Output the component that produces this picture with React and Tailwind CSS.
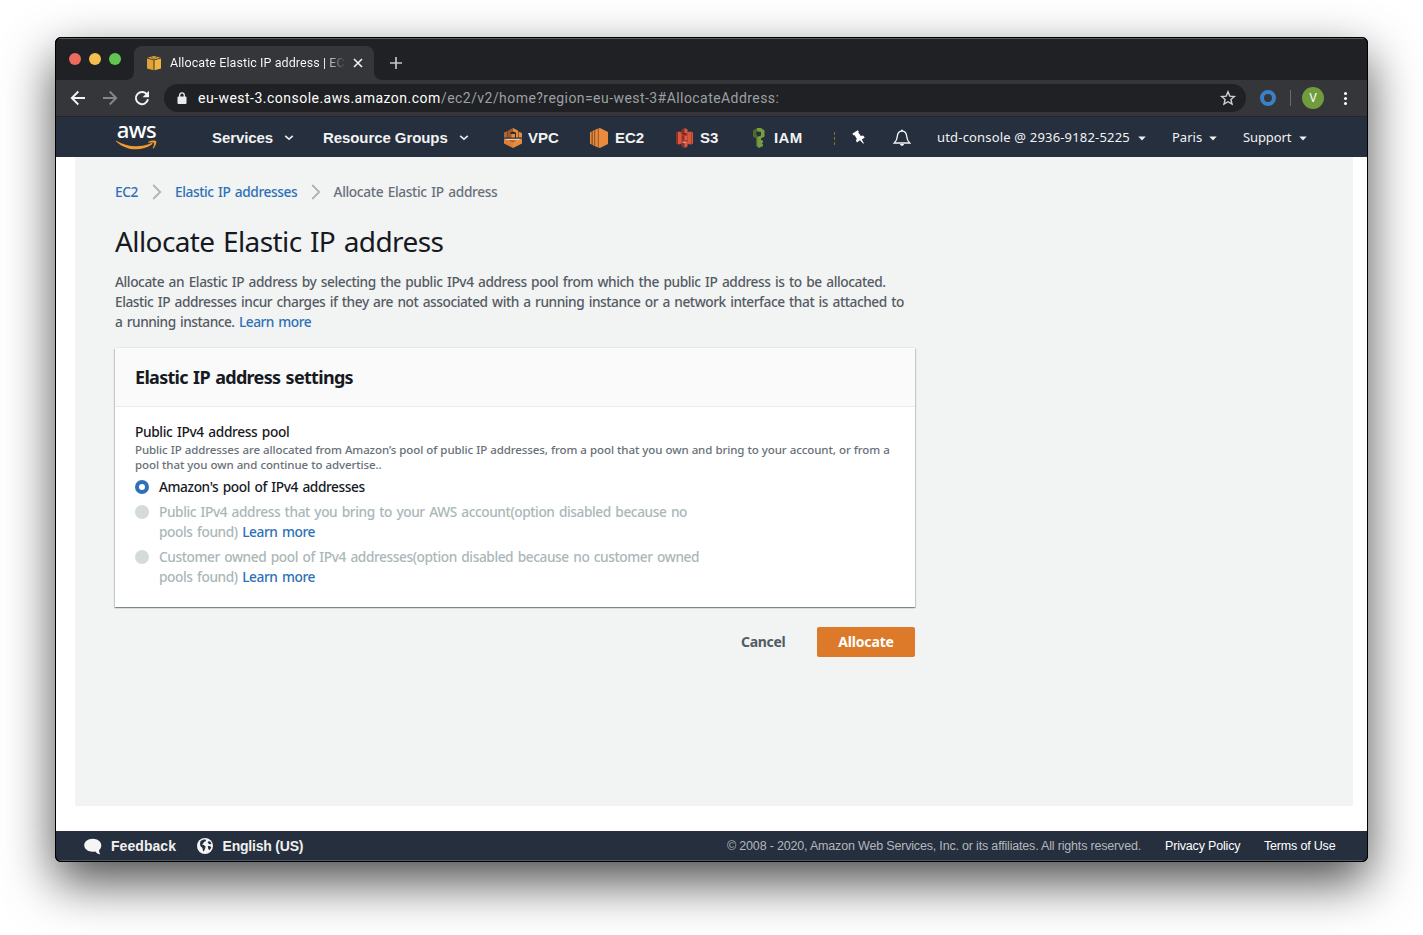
import React from "react";

const ember = "font-['Noto_Sans',sans-serif]";
const roboto = "font-['Roboto',sans-serif]";
const helv = "font-['Liberation_Sans',sans-serif]";

function Cube() {
  return (
    <svg width="16" height="16" viewBox="0 0 16 16" className="shrink-0">
      <path d="M1 3.600 7.500 5.200v10.100L1 13.400z" fill="#dfa236" />
      <path d="M15 3.600 8.500 5.200v10.100l6.500-1.900z" fill="#eeb340" />
      <path d="M1.400 2.800 8 1l6.600 1.800L8 4.400z" fill="#e8ac3c" />
      <path d="M5 2.500 8 3.200l3-.7" fill="none" stroke="#6b5425" strokeWidth=".7" />
    </svg>
  );
}

function TabFoot({ flip }) {
  return (
    <svg width="8" height="8" viewBox="0 0 8 8" fill="#35363a" className={flip ? "shrink-0 -scale-x-100" : "shrink-0"}>
      <path d="M8 0v8H0c4.400 0 8-3.600 8-8z" />
    </svg>
  );
}

function TabStrip() {
  return (
    <div className="flex h-[42px] bg-[#202124] pl-[13px] shadow-[inset_0_1px_0_#5c5d60]">
      <div className="mt-[15px] flex gap-2">
        <span className="size-3 rounded-full bg-[#ed6a5e]" />
        <span className="size-3 rounded-full bg-[#f5bf4f]" />
        <span className="size-3 rounded-full bg-[#61c554]" />
      </div>
      <div className="ml-[5px] flex items-end">
        <TabFoot />
        <div className="flex h-[34px] w-[240px] items-center rounded-t-lg bg-[#35363a] pl-3">
          <Cube />
          <div className={`${roboto} ml-2 w-[176px] whitespace-nowrap bg-gradient-to-r from-white from-[88%] to-[#35363a] bg-clip-text text-[12.500px] leading-4 tracking-[0.080px] text-transparent`}>
            Allocate Elastic IP address | EC
          </div>
          <svg width="10" height="10" viewBox="0 0 10 10" className="ml-[7px] shrink-0" stroke="#f1f1f1" strokeWidth="1.600">
            <path d="M1 1l8 8M9 1l-8 8" />
          </svg>
        </div>
        <TabFoot flip />
      </div>
      <svg width="12" height="12" viewBox="0 0 12 12" className="ml-2 mt-[19px]" stroke="#c4c5c8" strokeWidth="1.700">
        <path d="M6 0v12M0 6h12" />
      </svg>
    </div>
  );
}

function Toolbar() {
  return (
    <div className="flex h-[37px] items-center border-b border-[#242528] bg-[#35363a] pl-[14px]">
      <svg width="16" height="16" viewBox="0 0 16 16" fill="none" stroke="#f1f3f4" strokeWidth="1.900">
        <path d="M15 8H2M8.300 1.500 1.800 8l6.500 6.500" />
      </svg>
      <svg width="16" height="16" viewBox="0 0 16 16" fill="none" stroke="#85868a" strokeWidth="1.900" className="ml-4">
        <path d="M1 8h13M7.700 1.500 14.200 8l-6.500 6.500" />
      </svg>
      <svg width="16" height="16" viewBox="0 0 16 16" fill="none" className="ml-4">
        <path d="M13.300 5A6.100 6.100 0 1 0 14 9.300" stroke="#f1f3f4" strokeWidth="2" />
        <path d="M15 .8v6.400H8.600z" fill="#f1f3f4" />
      </svg>
      <div className="ml-[14px] flex h-7 w-[1082px] items-center rounded-full bg-[#202124] pl-[13px]">
        <svg width="10" height="13" viewBox="0 0 10 13">
          <rect x=".5" y="4.500" width="9" height="7.500" rx="1" fill="#e8eaed" />
          <path d="M2.700 5V3.200a2.300 2.300 0 0 1 4.600 0V5" fill="none" stroke="#e8eaed" strokeWidth="1.300" />
        </svg>
        <div className={`${roboto} ml-[11px] flex w-[1000px] whitespace-nowrap text-[14px] leading-5 text-[#9aa0a6]`}>
          <span className="w-[243px] tracking-[0.480px] text-white">eu-west-3.console.aws.amazon.com</span>
          <span className="tracking-[0.440px]">/ec2/v2/home?region=eu-west-3#AllocateAddress:</span>
        </div>
        <svg width="16" height="16" viewBox="0 0 16 16" fill="none" stroke="#d0d2d5" strokeWidth="1.400" className="ml-[22px]">
          <path d="M8 1.800l1.800 4.300 4.600.4-3.500 3 1.100 4.600L8 11.700l-4 2.400 1.100-4.600-3.500-3 4.600-.4z" />
        </svg>
      </div>
      <span className="ml-[14px] size-4 rounded-full border-4 border-[#3a7fc8]" />
      <span className="ml-[14px] h-4 w-px bg-[#6a6b6f]" />
      <span className={`${roboto} ml-[11px] flex size-[22px] items-center justify-center rounded-full bg-[#719c3e] text-[12px] text-white`}>V</span>
      <span className="ml-[20px] flex flex-col gap-[2px]">
        <i className="size-[3px] rounded-full bg-white" />
        <i className="size-[3px] rounded-full bg-white" />
        <i className="size-[3px] rounded-full bg-white" />
      </span>
    </div>
  );
}

function Chevron({ className }) {
  return (
    <svg width="10" height="6" viewBox="0 0 10 6" fill="none" stroke="#e8e8e8" strokeWidth="1.600" className={className}>
      <path d="M1.200 .8 5 4.200 8.800 .8" />
    </svg>
  );
}

function Caret({ className }) {
  return (
    <svg width="8" height="5" viewBox="0 0 8 5" fill="#f0f0f0" className={className}>
      <path d="M.3.5h7.400L4 4.500z" />
    </svg>
  );
}

function AwsLogo() {
  return (
    <div className={`${ember} mb-[5px] ml-[58.500px] flex w-[44px] flex-col items-center`}>
      <span className="h-[19px] text-[22px] font-medium leading-[16px] tracking-[-0.500px] text-white">aws</span>
      <svg width="43" height="10" viewBox="0 0 43 10" fill="#f29a2e">
        <path d="M1.300.8C7 4.300 14 6.300 21 6.300c5.500 0 10.500-1.200 15.500-3.300.9-.3 1.500.6.700 1.200C32.700 7.600 26.500 9.300 21 9.300 13.500 9.300 6.600 6.500 1.100 1.400.7 1 .9.6 1.300.8z" />
        <path d="M33.200 2c2.800-1.900 7.300-1.500 7.900-.9.600.7-.1 5.200-2.700 7.300-.4.3-.8.100-.6-.3.600-1.500 1.700-4.500 1.200-5.200-.5-.6-3.700-.3-5.500-.2-.5.1-.6-.4-.3-.7z" />
      </svg>
    </div>
  );
}

function VpcIcon() {
  return (
    <svg width="18" height="20" viewBox="0 0 18 20">
      <path d="M0 4.500 3.500 3v6.500H0z" fill="#b8642a" />
      <path d="M4 2.500 9 0v3.500L6.500 4.300V6H9v3.500H4z" fill="#a35a25" />
      <path d="M9 0l5 2.500v7h-2V4.500L9 3.500zM14.500 3.500 18 5v4.500h-3.500zM7.500 6H11v3.500H7.500z" fill="#e88b3e" />
      <path d="M9 12h9v3.500L9 20z" fill="#e88b3e" />
      <path d="M0 12h9v8l-9-4.500z" fill="#e07f36" />
      <path d="M0 10.700h18v.8l-9 1.500-9-1.500z" fill="#f3c9a0" />
      <path d="M4 12.300h9L9 14.300z" fill="#a35a25" />
    </svg>
  );
}

function Ec2Icon() {
  return (
    <svg width="18" height="20" viewBox="0 0 18 20">
      <path d="M8.500 .5 10 0l8 4v12l-8 4-1.500-.5z" fill="#e88b3e" />
      <path d="M5 1.700 8.500.5v19L5 18.300zM2.500 3l2-1v16l-2-1zM0 4.300 1.800 3.500v13L0 15.700z" fill="#e88b3e" />
      <path d="M7.800.5h1v19h-1zM4.300 2h1v16h-1zM1.600 3.500h1v13h-1z" fill="#a35a25" />
    </svg>
  );
}

function S3Icon() {
  return (
    <svg width="17" height="20" viewBox="0 0 17 20">
      <path d="M2 3.700h13v12.600H2z" fill="#a63d2c" />
      <path d="M0 4.500 2 3.500v13L0 15.500z" fill="#8c3123" />
      <path d="M2 3.500 5.500 4.500v11L2 16.500z" fill="#d9573f" />
      <path d="M15 3.500l-3.500 1v11l3.500 1zM17 4.500l-2-1v13l2-1z" fill="#d9573f" />
      <path d="M15 3.500h.6v13H15z" fill="#8c3123" />
      <path d="M5.500 1.500 8.500 0v5l-3 .7z" fill="#8c3123" />
      <path d="M8.500 0l3 1.500v4.200l-3-.7z" fill="#dd5b46" />
      <path d="M5.500 5.700 8.500 5l3 .7-3 .8z" fill="#5a1f17" />
      <path d="M6 8h2.500v4H6z" fill="#8c3123" />
      <path d="M8.500 8H11v4H8.500z" fill="#dd5b46" />
      <path d="M5.500 14.300l3 .7v5l-3-1.500z" fill="#8c3123" />
      <path d="M8.500 15l3-.7v4.200l-3 1.500z" fill="#dd5b46" />
      <path d="M5.500 14.300l3-.8 3 .8-3 .7z" fill="#f0a091" />
    </svg>
  );
}

function IamIcon() {
  return (
    <svg width="12" height="20" viewBox="0 0 12 20">
      <path d="M0 2.500 4 0v3L3.300 4v2.500L4.500 8v11L3 17.500v-7L0 8.500z" fill="#4f6b2c" />
      <path d="M4 0h4l3.500 2.500v6L8 10.500v1.200l2 1v2l-1.500.6 1.500 1V18l-4 2-1.800-1.500V9L8 7.500V4L4 3.200z" fill="#769e41" />
    </svg>
  );
}

function Shortcut({ icon, label, className, textClass }) {
  return (
    <div className={`flex items-center ${className}`}>
      {icon}
      <span className={textClass}>{label}</span>
    </div>
  );
}

function NavBar() {
  return (
    <div className={`${helv} flex h-10 items-center whitespace-nowrap bg-[#252f3e] pt-[2px] text-[15px] font-bold text-[#f2f2f2]`}>
      <AwsLogo />
      <span className="ml-[53.500px] w-[62px] tracking-[-0.100px]">Services</span>
      <Chevron className="ml-[10px]" />
      <span className="ml-[29px] w-[126px] tracking-[-0.080px]">Resource Groups</span>
      <Chevron className="ml-[10px]" />
      <Shortcut icon={<VpcIcon />} label="VPC" className="ml-[35px] w-[86px]" textClass="ml-[6px]" />
      <Shortcut icon={<Ec2Icon />} label="EC2" className="w-[86px]" textClass="ml-[7px]" />
      <Shortcut icon={<S3Icon />} label="S3" className="w-[77px]" textClass="ml-[7px]" />
      <Shortcut icon={<IamIcon />} label="IAM" className="w-[81px]" textClass="ml-[9px] tracking-[0.400px]" />
      <span className="h-[13px] w-0 border-l border-dashed border-[#9a6b22]" />
      <svg width="13" height="15" viewBox="0 0 13 15" className="mb-[2px] ml-[17px]" fill="#fff">
        <path d="M.5 3.500 5.800.3l1 1.200-.5 1 2.600 3.400 2.200-.3 1.700 2-3 2 2.100 3.700-.6.5L8 10.200 4.900 12.400 4 10.500l.8-1.800-2.400-3.600-1.200.1z" />
      </svg>
      <svg width="18" height="18" viewBox="0 0 18 18" className="ml-[28px]" fill="none" stroke="#f2f2f2" strokeWidth="1.300">
        <path d="M9 2.100c-3.100 0-4.500 2.300-4.700 5.300-.2 3-.8 4.600-3 6.600h15.400c-2.200-2-2.800-3.600-3-6.600C13.500 4.400 12.100 2.100 9 2.100z" />
        <path d="M7 15h4c0 1-.9 1.800-2 1.800S7 16 7 15zM8 .7h2v1.500H8z" fill="#f2f2f2" stroke="none" />
      </svg>
      <div className={`${ember} flex items-center text-[13px] font-normal`}>
        <span className="ml-[26px] w-[194px] tracking-[0.180px]">utd-console @ 2936-9182-5225</span>
        <Caret className="ml-[7px]" />
        <span className="ml-[26px] w-[30px]">Paris</span>
        <Caret className="ml-[7px]" />
        <span className="ml-[26px] w-[48px] tracking-[-0.100px]">Support</span>
        <Caret className="ml-[8px]" />
      </div>
    </div>
  );
}

function Crumb() {
  return (
    <svg width="10" height="16" viewBox="0 0 10 16" fill="none" stroke="#aab7b8" strokeWidth="1.900">
      <path d="M1.200 1l7 7-7 7" />
    </svg>
  );
}

function Option({ children, checked }) {
  return (
    <div className={`mb-[5px] flex ${checked ? "text-[#16191f]" : "text-[#aab7b8]"}`}>
      <span className={`mt-[3px] size-[14px] shrink-0 rounded-full ${checked ? "border-[4.500px] border-[#2f70b7] bg-white" : "bg-[#d5dbdb]"}`} />
      <div className="ml-[10px] whitespace-nowrap">{children}</div>
    </div>
  );
}

const link = "text-[#2d70b8]";

function Content() {
  return (
    <div className="h-[674px] bg-white pl-[19px] pr-[14px]">
      <div className={`${ember} h-[649px] bg-[#f2f3f3] pl-10 pt-[25px] text-[13.700px] font-medium leading-5 tracking-[-0.410px] text-[#545b64] [word-spacing:1.300px]`}>
        <div className="flex items-center whitespace-nowrap">
          <span className={`w-[25px] ${link}`}>EC2</span>
          <span className="ml-[12px] flex"><Crumb /></span>
          <span className={`ml-[13px] w-[123px] ${link}`}>Elastic IP addresses</span>
          <span className="ml-[13px] flex"><Crumb /></span>
          <span className="ml-[12.500px] tracking-[-0.340px] text-[#687078]">Allocate Elastic IP address</span>
        </div>
        <h1 className="mt-[21px] whitespace-nowrap text-[28px] font-normal leading-9 tracking-[-0.600px] text-[#16191f] [word-spacing:1.800px]">Allocate Elastic IP address</h1>
        <p className="mt-[13px] whitespace-nowrap">
          <span className="tracking-[-0.405px]">Allocate an Elastic IP address by selecting the public IPv4 address pool from which the public IP address is to be allocated.</span><br />
          <span className="tracking-[-0.440px]">Elastic IP addresses incur charges if they are not associated with a running instance or a network interface that is attached to</span><br />
          <span className="tracking-[-0.480px]">a running instance. <span className={link}>Learn more</span></span>
        </p>
        <div className="mt-4 h-[259px] w-[800px] bg-white shadow-[0_1px_1px_0_rgba(0,28,36,0.3),1px_1px_1px_0_rgba(0,28,36,0.15),-1px_1px_1px_0_rgba(0,28,36,0.15),0_-1px_0_0_#e6e8e8]">
          <div className="flex h-[59px] items-center border-b border-[#eaeded] bg-[#fafafa] px-5">
            <h2 className="whitespace-nowrap text-[18px] font-bold leading-[22px] tracking-[-0.700px] text-[#16191f]">Elastic IP address settings</h2>
          </div>
          <div className="px-5 pt-[15px]">
            <div className="tracking-[-0.350px] text-[#16191f]">Public IPv4 address pool</div>
            <div className="mb-[5px] whitespace-nowrap text-[11.500px] leading-[15px] tracking-[-0.100px] text-[#687078] [word-spacing:0.250px]">
              Public IP addresses are allocated from Amazon’s pool of public IP addresses, from a pool that you own and bring to your account, or from a<br />
              pool that you own and continue to advertise..
            </div>
            <Option checked>Amazon's pool of IPv4 addresses</Option>
            <Option>
              Public IPv4 address that you bring to your AWS account(option disabled because no<br />
              pools found) <span className={link}>Learn more</span>
            </Option>
            <Option>
              Customer owned pool of IPv4 addresses(option disabled because no customer owned<br />
              pools found) <span className={link}>Learn more</span>
            </Option>
          </div>
        </div>
        <div className="mt-5 flex h-[30px] w-[800px] items-center justify-end text-[14px] font-bold tracking-[-0.300px]">
          <span className="mr-[31px] w-[45px]">Cancel</span>
          <button className="flex h-[30px] w-[98px] items-center justify-center rounded-[2px] bg-[#dd7a2a] tracking-[-0.150px] text-white">Allocate</button>
        </div>
      </div>
    </div>
  );
}

function Footer() {
  return (
    <div className={`${helv} flex h-[30px] items-center whitespace-nowrap border-b border-[#4b5866] bg-[#252f3e] pl-[28px] pt-px text-[14px] font-bold text-[#f0f0f0]`}>
      <svg width="18" height="17" viewBox="0 0 18 17" fill="#f5f5f5">
        <path d="M8.700.7C4 .7.200 3.600.200 7.200s3.800 6.500 8.500 6.500c1 0 1.900-.1 2.700-.3 1 1.500 2.600 2.700 4.900 2.900-.9-1.100-1.300-2.700-1.200-4.200 1.400-1.200 2.200-2.900 2.200-4.900 0-3.600-3.900-6.500-8.600-6.500z" />
      </svg>
      <span className="ml-[9px] w-[66px] tracking-[0.050px]">Feedback</span>
      <svg width="16" height="16" viewBox="0 0 16 16" className="ml-[20px]">
        <circle cx="8" cy="8" r="8" fill="#f5f5f5" />
        <path d="M3.500 3 6.500 1.500l2.700.300L8.500 3.500l-1.500.3-.5 1.500-1.700 1 2.400.9 1.500 1.600-.8 2.200-1 2.500-1-.8-.4-2.600-2-1.800L3 6zM10.500 4.500l1.500-1.500 1.500 1 1 2-2.200.3zM10.800 8l2.600.2.900 1.500-2 2.600-1.200-1.800z" fill="#252f3e" />
      </svg>
      <span className="ml-[9.500px] w-[81.500px] tracking-[-0.200px]">English (US)</span>
      <div className="ml-auto flex pr-[32px] text-[12.500px] font-normal tracking-[-0.180px]">
        <span className="w-[415px] text-[#b3b8bc]">© 2008 - 2020, Amazon Web Services, Inc. or its affiliates. All rights reserved.</span>
        <span className="ml-[23px] w-[76px] text-white">Privacy Policy</span>
        <span className="ml-[23px] w-[71px] text-white">Terms of Use</span>
      </div>
    </div>
  );
}

export default function App() {
  return (
    <div className="h-[935px] w-[1423px] overflow-hidden bg-white pl-[55px] pt-[37px]">
      <div className="w-[1313px] rounded-[6px] bg-black shadow-[0_20px_50px_rgba(0,0,0,0.7)]">
        <div className="overflow-hidden rounded-[6px] border border-black">
          <div className="overflow-hidden rounded-[5px]">
            <TabStrip />
            <Toolbar />
            <NavBar />
            <Content />
            <Footer />
          </div>
        </div>
      </div>
    </div>
  );
}
